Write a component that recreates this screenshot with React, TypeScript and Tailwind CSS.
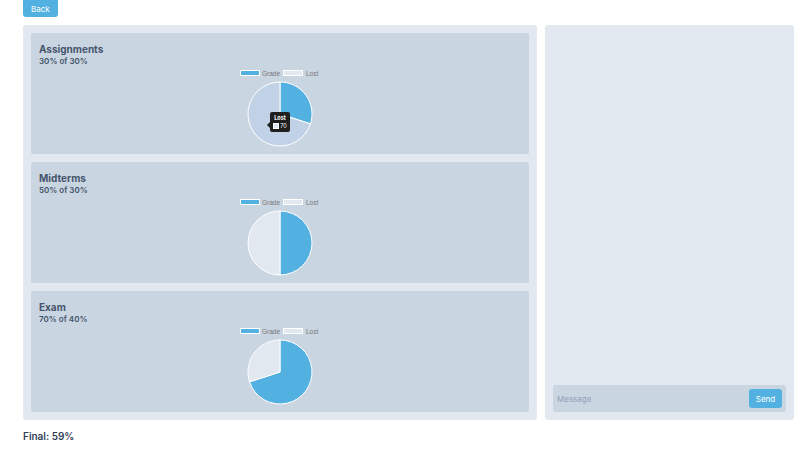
import React from 'react'

const BLUE = '#52b1e1'
const LOST = '#e2e8f0'
const LOST_HOVER = '#c2d2e6'

interface Section {
  name: string
  grade: number
  weight: number
  hovered?: boolean
}

const sections: Section[] = [
  { name: 'Assignments', grade: 30, weight: 30, hovered: true },
  { name: 'Midterms', grade: 50, weight: 30 },
  { name: 'Exam', grade: 70, weight: 40 },
]

function slice(cx: number, cy: number, r: number, from: number, to: number) {
  const a0 = (from / 100) * Math.PI * 2 - Math.PI / 2
  const a1 = (to / 100) * Math.PI * 2 - Math.PI / 2
  const x0 = cx + r * Math.cos(a0)
  const y0 = cy + r * Math.sin(a0)
  const x1 = cx + r * Math.cos(a1)
  const y1 = cy + r * Math.sin(a1)
  const large = to - from > 50 ? 1 : 0
  return `M${cx},${cy} L${x0},${y0} A${r},${r} 0 ${large} 1 ${x1},${y1} Z`
}

function Pie({ grade, hovered }: { grade: number; hovered?: boolean }) {
  const lost = 100 - grade
  return (
    <div className="relative mx-auto w-[100px]">
      <svg width="100" height="82" viewBox="0 0 100 82" className="block">
        <rect x="10.5" y="4.5" width="19" height="5" fill={BLUE} stroke="#fff" strokeWidth="1" />
        <text x="32" y="9.5" fontSize="6.5" fill="#777" fontFamily="Liberation Sans, sans-serif">Grade</text>
        <rect x="53.5" y="4.5" width="19" height="5" fill={LOST} stroke="#fff" strokeWidth="1" />
        <text x="76" y="9.5" fontSize="6.5" fill="#777" fontFamily="Liberation Sans, sans-serif">Lost</text>
        <path d={slice(50, 48, 32, 0, grade)} fill={BLUE} stroke="#fff" strokeWidth="1" />
        <path d={slice(50, 48, 32, grade, 100)} fill={hovered ? LOST_HOVER : LOST} stroke="#fff" strokeWidth="1" />
      </svg>
      {hovered && (
        <div className="absolute left-[40px] top-[46px] flex w-[20px] flex-col items-center rounded-[2px] bg-[#1f1f1f] py-[2px] text-[5.5px] leading-[8px] text-white">
          <span className="absolute left-[-3px] top-[10px] h-0 w-0 border-y-[3px] border-r-[3px] border-y-transparent border-r-[#1f1f1f]" />
          <span className="font-bold">Lost</span>
          <span className="flex items-center gap-[1px]">
            <span className="h-[6px] w-[6px] border border-white bg-[#e2e8f0]" />
            {lost}
          </span>
        </div>
      )}
    </div>
  )
}

export default function App() {
  return (
    <div className="min-h-screen bg-white pl-[23px] pr-[12px] font-['Inter',sans-serif] text-slate-600">
      <div className="flex">
        <button className="h-[17px] rounded-b-[3px] bg-[#52b1e1] px-[8px] text-[8px] text-white">Back</button>
      </div>
      <div className="mt-[8px] flex gap-[8px]">
        <div className="flex w-[514px] shrink-0 flex-col gap-[8px] rounded-[3px] bg-slate-200 p-[8px]">
          {sections.map((s) => (
            <div key={s.name} className="flex h-[121px] flex-col rounded-[2px] bg-slate-300 px-[8px] pt-[9px]">
              <h2 className="text-[10px] font-bold leading-[14px] text-slate-600">{s.name}</h2>
              <p className="text-[8px] font-semibold leading-[10px] text-slate-600">
                {s.grade}% of {s.weight}%
              </p>
              <Pie grade={s.grade} hovered={s.hovered} />
            </div>
          ))}
        </div>
        <div className="flex w-[249px] shrink-0 flex-col justify-end rounded-[3px] bg-slate-200 p-[8px]">
          <div className="flex h-[27px] items-center rounded-[3px] bg-slate-300 pl-[4px] pr-[4px]">
            <input
              placeholder="Message"
              className="min-w-0 flex-1 bg-transparent text-[8px] text-slate-600 placeholder-slate-400 outline-none"
            />
            <button className="h-[19px] w-[33px] rounded-[3px] bg-[#52b1e1] text-[8px] text-white">Send</button>
          </div>
        </div>
      </div>
      <p className="mt-[9px] text-[10px] font-semibold text-slate-700">Final: 59%</p>
    </div>
  )
}
